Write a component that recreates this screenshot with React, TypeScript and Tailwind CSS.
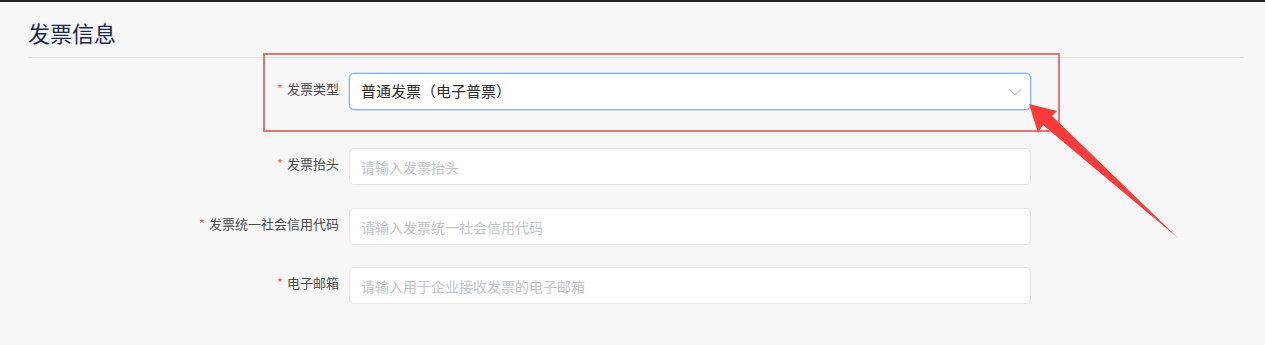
const font = { fontFamily: '"Noto Sans CJK SC", "Noto Sans", sans-serif' };

interface FieldProps {
  label: string;
  placeholder: string;
  className?: string;
}

function Field({ label, placeholder, className = "" }: FieldProps) {
  return (
    <div className={`flex items-start ${className}`}>
      <label className="flex w-[311px] flex-none justify-end pt-[6px] text-[13px] leading-[20px] text-[#4a4a4a]">
        <span className="mr-[4px] text-[#f56c6c]">*</span>
        {label}
      </label>
      <input
        className="ml-[10px] h-[37px] w-[682px] rounded-[5px] border border-[#e2e4e8] bg-white px-[11px] text-[14px] text-[#333] outline-none placeholder:text-[#c0c4cc]"
        placeholder={placeholder}
        style={font}
      />
    </div>
  );
}

export default function App() {
  return (
    <div className="relative h-[345px] w-[1265px] overflow-hidden bg-[#f7f7f7]" style={font}>
      <div className="h-[2px] bg-[#242424]" />
      <div className="px-[28px]">
        <h2 className="pt-[15px] text-[22px] leading-[30px] text-[#1c2a50]">发票信息</h2>
        <div className="mt-[10px] mr-[-7px] border-b border-[#e3e3e3]" />

        <div className="pt-[15px]">
          <div className="flex items-start">
            <label className="flex w-[311px] flex-none justify-end pt-[6px] text-[13px] leading-[20px] text-[#4a4a4a]">
              <span className="mr-[4px] text-[#f56c6c]">*</span>
              发票类型
            </label>
            <div className="ml-[10px] flex h-[37px] w-[682px] items-center justify-between rounded-[5px] border border-[#7fb4f4] bg-white pr-[9px] pl-[11px] shadow-[0_0_0_0.5px_#a9cdf7]">
              <span className="text-[15px] text-[#2b2b2b]">普通发票（电子普票）</span>
              <svg width="12" height="7" viewBox="0 0 12 7" className="mt-[1px]">
                <polyline points="0.5,0.5 6,6 11.5,0.5" fill="none" stroke="#c0c4cc" strokeWidth="1.1" />
              </svg>
            </div>
          </div>
          <Field className="mt-[38px]" label="发票抬头" placeholder="请输入发票抬头" />
          <Field className="mt-[23px]" label="发票统一社会信用代码" placeholder="请输入发票统一社会信用代码" />
          <Field className="mt-[22px]" label="电子邮箱" placeholder="请输入用于企业接收发票的电子邮箱" />
        </div>
      </div>

      {/* annotation: highlight box + arrow */}
      <div className="pointer-events-none absolute top-[53px] left-[263px] h-[79px] w-[797px] border-2 border-[#e4766f]" />
      <svg className="pointer-events-none absolute top-0 left-0" width="1265" height="345">
        <polygon
          points="1029,104 1057,111 1052,116 1178,238 1043,125 1038,133"
          fill="#fb3a3a"
        />
      </svg>
    </div>
  );
}
